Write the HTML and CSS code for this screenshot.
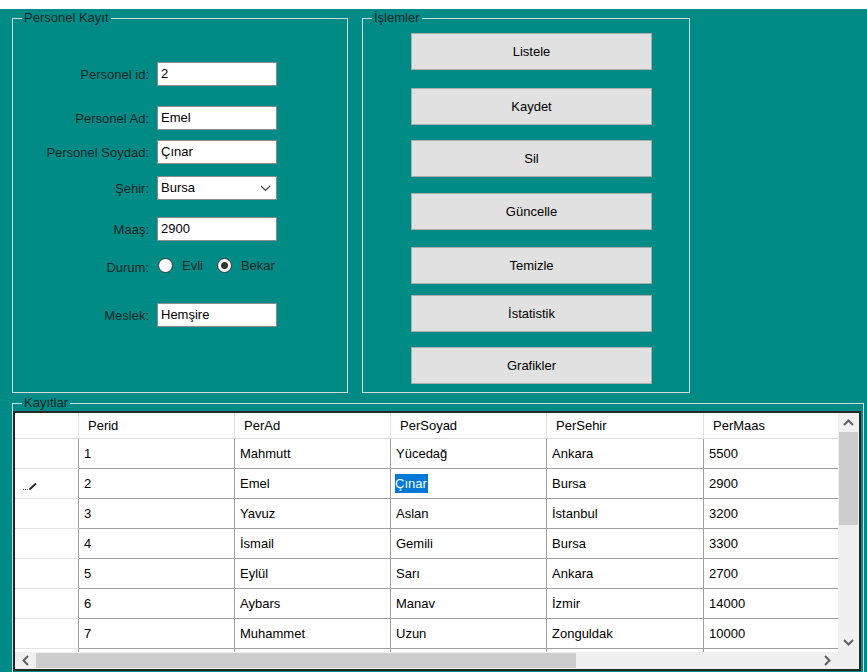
FILE: index.html
```html
<!DOCTYPE html>
<html lang="tr">
<head>
<meta charset="utf-8">
<title>Personel Kayıt</title>
<link rel="stylesheet" href="styles.css">
</head>
<body>
<div class="window">
  <div class="top">
    <section class="group personel">
      <span class="legend">Personel Kayıt</span>
      <div class="field f-id"><label>Personel id:</label><div class="input">2</div></div>
      <div class="field f-ad"><label>Personel Ad:</label><div class="input">Emel</div></div>
      <div class="field f-soyad"><label>Personel Soydad:</label><div class="input">Çınar</div></div>
      <div class="field f-sehir"><label>Şehir:</label><div class="input select"><span>Bursa</span><svg class="chev" width="11" height="7" viewBox="0 0 11 7"><polyline points="1,1 5.5,5.5 10,1" fill="none" stroke="#444" stroke-width="1.2"/></svg></div></div>
      <div class="field f-maas"><label>Maaş:</label><div class="input">2900</div></div>
      <div class="field f-durum"><label>Durum:</label>
        <div class="radio r-evli"><span class="circle"></span><span>Evli</span></div>
        <div class="radio r-bekar"><span class="circle checked"></span><span>Bekar</span></div>
      </div>
      <div class="field f-meslek"><label>Meslek:</label><div class="input">Hemşire</div></div>
    </section>
    <section class="group islemler">
      <span class="legend">İşlemler</span>
      <button class="btn b1">Listele</button>
      <button class="btn b2">Kaydet</button>
      <button class="btn b3">Sil</button>
      <button class="btn b4">Güncelle</button>
      <button class="btn b5">Temizle</button>
      <button class="btn b6">İstatistik</button>
      <button class="btn b7">Grafikler</button>
    </section>
  </div>
  <section class="group kayitlar">
    <span class="legend">Kayıtlar</span>
    <div class="grid">
      <div class="grid-body">
        <table>
          <colgroup><col class="c-rh"><col class="c-d"><col class="c-d"><col class="c-d"><col class="c-e"><col class="c-d"></colgroup>
          <thead>
            <tr><th class="rh"></th><th>Perid</th><th>PerAd</th><th>PerSoyad</th><th>PerSehir</th><th>PerMaas</th></tr>
          </thead>
          <tbody>
            <tr><td class="rh"></td><td>1</td><td>Mahmutt</td><td>Yücedağ</td><td>Ankara</td><td>5500</td></tr>
            <tr><td class="rh"><svg class="pencil" width="15" height="9" viewBox="0 0 15 9"><rect x="0" y="7" width="1" height="1" fill="#555"/><rect x="2" y="7" width="1" height="1" fill="#555"/><rect x="4" y="7" width="1" height="1" fill="#555"/><line x1="6.5" y1="7.5" x2="13" y2="1.5" stroke="#222" stroke-width="1.8"/></svg></td><td>2</td><td>Emel</td><td class="editing"><span class="sel">Çınar</span></td><td>Bursa</td><td>2900</td></tr>
            <tr><td class="rh"></td><td>3</td><td>Yavuz</td><td>Aslan</td><td>İstanbul</td><td>3200</td></tr>
            <tr><td class="rh"></td><td>4</td><td>İsmail</td><td>Gemili</td><td>Bursa</td><td>3300</td></tr>
            <tr><td class="rh"></td><td>5</td><td>Eylül</td><td>Sarı</td><td>Ankara</td><td>2700</td></tr>
            <tr><td class="rh"></td><td>6</td><td>Aybars</td><td>Manav</td><td>İzmir</td><td>14000</td></tr>
            <tr><td class="rh"></td><td>7</td><td>Muhammet</td><td>Uzun</td><td>Zonguldak</td><td>10000</td></tr>
            <tr><td class="rh"></td><td></td><td></td><td></td><td></td><td></td></tr>
          </tbody>
        </table>
      </div>
      <div class="vscroll">
        <div class="sbtn"><svg width="11" height="7" viewBox="0 0 11 7"><polyline points="1,6 5.5,1.5 10,6" fill="none" stroke="#606060" stroke-width="2"/></svg></div>
        <div class="vthumb"></div>
        <div class="vtrack"></div>
        <div class="sbtn"><svg width="11" height="7" viewBox="0 0 11 7"><polyline points="1,1 5.5,5.5 10,1" fill="none" stroke="#606060" stroke-width="2"/></svg></div>
      </div>
      <div class="hscroll">
        <div class="hbtn"><svg width="7" height="11" viewBox="0 0 7 11"><polyline points="6,1 1.5,5.5 6,10" fill="none" stroke="#606060" stroke-width="2"/></svg></div>
        <div class="hthumb"></div>
        <div class="htrack"></div>
        <div class="hbtn"><svg width="7" height="11" viewBox="0 0 7 11"><polyline points="1,1 5.5,5.5 1,10" fill="none" stroke="#606060" stroke-width="2"/></svg></div>
      </div>
      <div class="corner"></div>
    </div>
  </section>
</div>
</body>
</html>
```
FILE: styles.css
```css
body {
  margin: 0;
  background: #ffffff;
  font-family: "Liberation Sans", Arial, sans-serif;
  font-size: 13px;
  color: #000;
}

.window {
  margin-top: 9px;
  height: 663px;
  background: #008b87;
  padding: 9px 0 0 12px;
  box-sizing: border-box;
}

.top {
  display: flex;
  height: 375px;
}

.group {
  position: relative;
  border: 1px solid #cfdcdb;
  box-sizing: border-box;
}

.legend {
  position: absolute;
  top: -9px;
  left: 9px;
  padding: 0 2px;
  background: #008b87;
  color: #0c2626;
  line-height: 16px;
  white-space: nowrap;
}

/* Personel Kayıt */
.personel {
  width: 336px;
  height: 375px;
}

.field {
  display: flex;
  align-items: center;
  height: 24px;
}

.field label {
  width: 136px;
  margin-right: 8px;
  text-align: right;
  color: #0c2626;
  white-space: nowrap;
}

.f-id { margin-top: 43px; }
.f-ad { margin-top: 20px; }
.f-soyad { margin-top: 10px; }
.f-sehir { margin-top: 12px; }
.f-maas { margin-top: 17px; }
.f-durum { margin-top: 16px; height: 17px; }
.f-meslek { margin-top: 29px; }

.f-durum label { padding-top: 4px; }

.input {
  width: 120px;
  height: 24px;
  box-sizing: border-box;
  border: 1px solid #8c8c8c;
  background: #fff;
  padding: 0 3px;
  line-height: 22px;
  white-space: nowrap;
}

.select {
  display: flex;
  align-items: center;
  justify-content: space-between;
  padding-right: 5px;
}

.radio {
  display: flex;
  align-items: center;
  color: #0c2626;
}

.r-evli { margin-left: 1px; }
.r-bekar { margin-left: 14px; }

.circle {
  width: 15px;
  height: 15px;
  box-sizing: border-box;
  border: 1px solid #333;
  border-radius: 50%;
  background: #fff;
  margin-right: 9px;
  display: flex;
  align-items: center;
  justify-content: center;
}

.circle.checked::after {
  content: "";
  width: 7px;
  height: 7px;
  border-radius: 50%;
  background: #333;
}

/* İşlemler */
.islemler {
  width: 328px;
  height: 375px;
  margin-left: 14px;
}

.btn {
  display: block;
  width: 241px;
  height: 37px;
  margin-left: 48px;
  padding: 0;
  background: #e1e1e1;
  border: 1px solid #adadad;
  font-family: "Liberation Sans", Arial, sans-serif;
  font-size: 13px;
  color: #000;
}

.b1 { margin-top: 14px; }
.b2 { margin-top: 18px; }
.b3 { margin-top: 15px; }
.b4 { margin-top: 16px; }
.b5 { margin-top: 17px; }
.b6 { margin-top: 11px; }
.b7 { margin-top: 15px; }

/* Kayıtlar */
.kayitlar {
  margin-top: 10px;
  width: 852px;
  height: 269px;
  padding-top: 7px;
  border-bottom: none;
}

.grid {
  display: grid;
  grid-template-columns: 823px 21px;
  grid-template-rows: 239px 17px;
  width: 848px;
  height: 260px;
  box-sizing: border-box;
  border: 2px solid #262626;
  background: #fff;
}

.grid-body {
  overflow: hidden;
  background: #fff;
}

table {
  border-collapse: separate;
  border-spacing: 0;
  table-layout: fixed;
  width: 845px;
}

.c-rh { width: 64px; }
.c-d { width: 156px; }
.c-e { width: 157px; }

thead tr { height: 26px; }
tbody tr { height: 30px; }

th {
  font-weight: normal;
  text-align: left;
  padding: 0 0 0 9px;
  border-right: 1px solid #e3e3e3;
  border-bottom: 1px solid #d9d9d9;
  white-space: nowrap;
  overflow: hidden;
}

td {
  padding: 0 0 0 5px;
  border-right: 1px solid #a0a0a0;
  border-bottom: 1px solid #a0a0a0;
  white-space: nowrap;
  overflow: hidden;
}

td.rh {
  padding: 0 0 0 8px;
  border-bottom-color: #e3e3e3;
}

th.rh {
  padding: 0;
}

.pencil {
  display: block;
  margin-top: 5px;
}

td.editing { padding-left: 4px; }

.sel {
  background: #0078d7;
  color: #fff;
  padding: 2px 1px 2px 0;
}

.vscroll {
  background: #f0f0f0;
  display: flex;
  flex-direction: column;
}

.sbtn {
  height: 19px;
  display: flex;
  align-items: center;
  justify-content: center;
  flex: none;
}

.vthumb {
  height: 93px;
  background: #cdcdcd;
  margin: 0 1px;
  flex: none;
}

.vtrack { flex: 1; }

.hscroll {
  background: #f0f0f0;
  display: flex;
}

.hbtn {
  width: 21px;
  display: flex;
  align-items: center;
  justify-content: center;
  flex: none;
}

.hthumb {
  width: 540px;
  background: #cdcdcd;
  margin: 1px 0;
  flex: none;
}

.htrack { flex: 1; }

.corner { background: #f0f0f0; }
```
